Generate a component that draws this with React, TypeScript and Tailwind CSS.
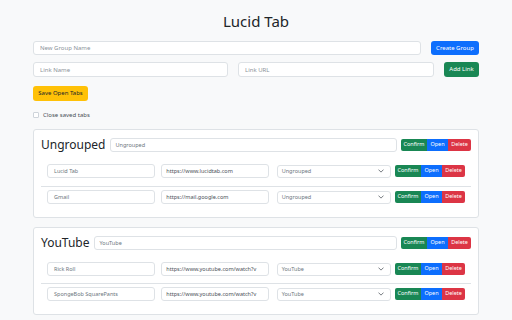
import React from "react";

const inputTop =
  "h-full rounded-[3px] border border-[#dee2e6] bg-white px-[6px] text-[6px] text-[#495057] placeholder:text-[#8c939a] outline-none";

function BtnGroup() {
  return (
    <div className="flex h-[12px] shrink-0 overflow-hidden rounded-[2px] text-[5.5px] leading-none text-white">
      <button className="flex w-[26px] items-center justify-center bg-[#198754]">Confirm</button>
      <button className="flex w-[21px] items-center justify-center bg-[#0d6efd]">Open</button>
      <button className="flex w-[23px] items-center justify-center bg-[#dc3545]">Delete</button>
    </div>
  );
}

function Chevron() {
  return (
    <svg width="6" height="4" viewBox="0 0 16 10" className="shrink-0">
      <path d="M2 2l6 6 6-6" fill="none" stroke="#495057" strokeWidth="2" strokeLinecap="round" strokeLinejoin="round" />
    </svg>
  );
}

function LinkRow({ name, url, group }: { name: string; url: string; group: string }) {
  return (
    <div className="flex h-[14px] items-center px-[6px]">
      <div className="flex h-full w-[108.5px] items-center rounded-[3px] border border-[#dee2e6] bg-white px-[6px] text-[5.5px] text-[#6c757d]">
        {name}
      </div>
      <div className="ml-[6.5px] flex h-full w-[108px] items-center overflow-hidden whitespace-nowrap rounded-[3px] border border-[#dee2e6] bg-white px-[4px] text-[5.5px] text-[#495057]">
        {url}
      </div>
      <div className="ml-[8px] flex h-[13px] w-[114.5px] items-center justify-between rounded-[3px] border border-[#dee2e6] bg-white pl-[4px] pr-[6px] text-[5.5px] text-[#6c757d]">
        <span>{group}</span>
        <Chevron />
      </div>
      <div className="ml-[4.5px]">
        <BtnGroup />
      </div>
    </div>
  );
}

function Card({
  title,
  value,
  links,
  rowGap,
}: {
  title: string;
  value: string;
  links: { name: string; url: string }[];
  rowGap: string;
}) {
  return (
    <div className="rounded-[3px] border border-[#dee2e6] bg-white px-[7px] pb-[13px] pt-[8px]">
      <div className="flex h-[14px] items-center">
        <h2 className="shrink-0 text-[12px] leading-none text-[#212529]">{title}</h2>
        <div className="ml-[4px] flex h-full flex-1 items-center rounded-[3px] border border-[#dee2e6] bg-white px-[5px] text-[5.5px] text-[#6c757d]">
          {value}
        </div>
        <div className="ml-[4px]">
          <BtnGroup />
        </div>
      </div>
      <div className="mt-[12px]">
        <LinkRow name={links[0].name} url={links[0].url} group={value} />
      </div>
      <div className={`${rowGap} border-t border-[#dee2e6]`} />
      <div className="mt-[3px]">
        <LinkRow name={links[1].name} url={links[1].url} group={value} />
      </div>
    </div>
  );
}

export default function App() {
  return (
    <div className="h-[320px] w-[512px] overflow-hidden bg-[#f8f9fa] font-['Noto_Sans',sans-serif]">
      <div className="ml-[33px] w-[446px]">
        <h1 className="pt-[11px] text-center text-[15px] leading-[20px] text-[#212529]">Lucid Tab</h1>
        <div className="mt-[10px] flex h-[14px] gap-[10px]">
          <input className={`${inputTop} flex-1`} placeholder="New Group Name" />
          <button className="h-full w-[48px] rounded-[3px] bg-[#0d6efd] text-[6px] text-white">Create Group</button>
        </div>
        <div className="mt-[7px] flex h-[15px] gap-[10px]">
          <input className={`${inputTop} w-[195px]`} placeholder="Link Name" />
          <input className={`${inputTop} w-[196px]`} placeholder="Link URL" />
          <button className="h-full w-[35px] rounded-[3px] bg-[#198754] text-[6px] text-white">Add Link</button>
        </div>
        <button className="mt-[7px] h-[15px] w-[55px] rounded-[3px] bg-[#ffc107] text-[6px] text-[#212529]">
          Save Open Tabs
        </button>
        <div className="mt-[11px] flex h-[6px] items-center">
          <div className="h-[6px] w-[6px] rounded-[1px] border border-[#ced4da] bg-white" />
          <span className="ml-[4px] text-[6px] leading-none text-[#495057]">Close saved tabs</span>
        </div>
        <div className="mt-[11px]">
          <Card
            title="Ungrouped"
            value="Ungrouped"
            rowGap="mt-[8px]"
            links={[
              { name: "Lucid Tab", url: "https://www.lucidtab.com" },
              { name: "Gmail", url: "https://mail.google.com" },
            ]}
          />
        </div>
        <div className="mt-[9px]">
          <Card
            title="YouTube"
            value="YouTube"
            rowGap="mt-[7px]"
            links={[
              { name: "Rick Roll", url: "https://www.youtube.com/watch?v" },
              { name: "SpongeBob SquarePants", url: "https://www.youtube.com/watch?v" },
            ]}
          />
        </div>
      </div>
    </div>
  );
}
